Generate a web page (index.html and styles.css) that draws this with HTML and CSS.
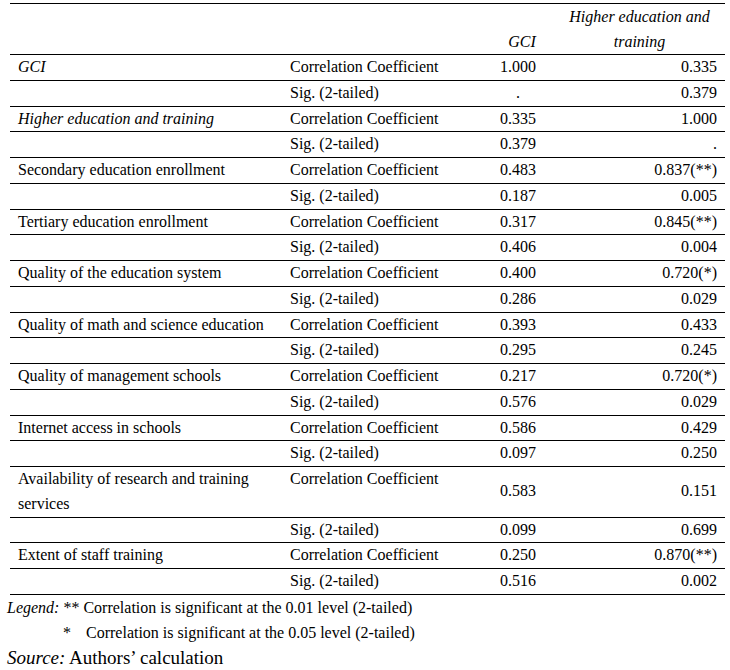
FILE: index.html
```html
<!DOCTYPE html>
<html lang="en">
<head>
  <meta charset="UTF-8">
  <title>Correlation table</title>
  <link rel="stylesheet" href="styles.css">
</head>
<body>

  <table class="corr">
    <colgroup>
      <col class="c-name">
      <col class="c-stat">
      <col class="c-gci">
      <col class="c-hed">
    </colgroup>
    <thead>
      <tr>
        <th></th>
        <th></th>
        <th class="gci">GCI</th>
        <th class="hed">Higher education and training</th>
      </tr>
    </thead>
    <tbody>
      <tr><td class="name it">GCI</td><td>Correlation Coefficient</td><td class="gci">1.000</td><td class="hed">0.335</td></tr>
      <tr><td></td><td>Sig. (2-tailed)</td><td class="gci">.</td><td class="hed">0.379</td></tr>
      <tr><td class="name it">Higher education and training</td><td>Correlation Coefficient</td><td class="gci">0.335</td><td class="hed">1.000</td></tr>
      <tr><td></td><td>Sig. (2-tailed)</td><td class="gci">0.379</td><td class="hed">.</td></tr>
      <tr><td class="name">Secondary education enrollment</td><td>Correlation Coefficient</td><td class="gci">0.483</td><td class="hed">0.837(**)</td></tr>
      <tr><td></td><td>Sig. (2-tailed)</td><td class="gci">0.187</td><td class="hed">0.005</td></tr>
      <tr><td class="name">Tertiary education enrollment</td><td>Correlation Coefficient</td><td class="gci">0.317</td><td class="hed">0.845(**)</td></tr>
      <tr><td></td><td>Sig. (2-tailed)</td><td class="gci">0.406</td><td class="hed">0.004</td></tr>
      <tr><td class="name">Quality of the education system</td><td>Correlation Coefficient</td><td class="gci">0.400</td><td class="hed">0.720(*)</td></tr>
      <tr><td></td><td>Sig. (2-tailed)</td><td class="gci">0.286</td><td class="hed">0.029</td></tr>
      <tr><td class="name">Quality of math and science education</td><td>Correlation Coefficient</td><td class="gci">0.393</td><td class="hed">0.433</td></tr>
      <tr><td></td><td>Sig. (2-tailed)</td><td class="gci">0.295</td><td class="hed">0.245</td></tr>
      <tr><td class="name">Quality of management schools</td><td>Correlation Coefficient</td><td class="gci">0.217</td><td class="hed">0.720(*)</td></tr>
      <tr><td></td><td>Sig. (2-tailed)</td><td class="gci">0.576</td><td class="hed">0.029</td></tr>
      <tr><td class="name">Internet access in schools</td><td>Correlation Coefficient</td><td class="gci">0.586</td><td class="hed">0.429</td></tr>
      <tr><td></td><td>Sig. (2-tailed)</td><td class="gci">0.097</td><td class="hed">0.250</td></tr>
      <tr class="tall"><td class="name">Availability of research and training services</td><td>Correlation Coefficient</td><td class="gci">0.583</td><td class="hed">0.151</td></tr>
      <tr><td></td><td>Sig. (2-tailed)</td><td class="gci">0.099</td><td class="hed">0.699</td></tr>
      <tr><td class="name">Extent of staff training</td><td>Correlation Coefficient</td><td class="gci">0.250</td><td class="hed">0.870(**)</td></tr>
      <tr><td></td><td>Sig. (2-tailed)</td><td class="gci">0.516</td><td class="hed">0.002</td></tr>
    </tbody>
  </table>

  <div class="notes">
    <p><em>Legend:</em> ** Correlation is significant at the 0.01 level (2-tailed)</p>
    <p class="indent"><span class="star">*</span>Correlation is significant at the 0.05 level (2-tailed)</p>
    <p class="source"><em>Source:</em> Authors’ calculation</p>
  </div>

</body>
</html>
```

FILE: styles.css
```css
body {
  margin: 0;
  background: #fff;
  color: #000;
  font-family: "Times New Roman", "Liberation Serif", serif;
  font-size: 16px;
}

.corr {
  border-collapse: collapse;
  table-layout: fixed;
  width: 715px;
  margin: 3px 0 0 10px;
}

.c-name { width: 272px; }
.c-stat { width: 188px; }
.c-gci { width: 96px; }
.c-hed { width: 159px; }

.corr thead tr {
  border-top: 1px solid #000;
  border-bottom: 1px solid #000;
}

.corr th {
  font-weight: normal;
  font-style: italic;
  line-height: 25px;
  padding: 0;
  vertical-align: bottom;
}

.corr th.gci {
  text-align: center;
  padding-left: 8px;
}

.corr th.hed {
  text-align: center;
  padding: 0 12px 0 0;
}

.corr tbody tr {
  border-bottom: 1px solid #000;
}

.corr td {
  padding: 0 0 0 8px;
  line-height: 24.75px;
  vertical-align: top;
  white-space: nowrap;
}

.corr td.name {
  white-space: normal;
  padding-right: 8px;
}

.corr td.gci {
  text-align: center;
  padding: 0;
  vertical-align: middle;
}

.corr td.hed {
  text-align: right;
  padding: 0 8px 0 0;
  vertical-align: middle;
}

.it {
  font-style: italic;
}

.notes {
  margin-left: 7px;
}

.notes p {
  margin: 0;
  line-height: 25px;
}

.notes .indent {
  padding-left: 56px;
}

.star {
  display: inline-block;
  width: 23px;
}

.notes .source {
  font-size: 19px;
  line-height: 26px;
}
```
